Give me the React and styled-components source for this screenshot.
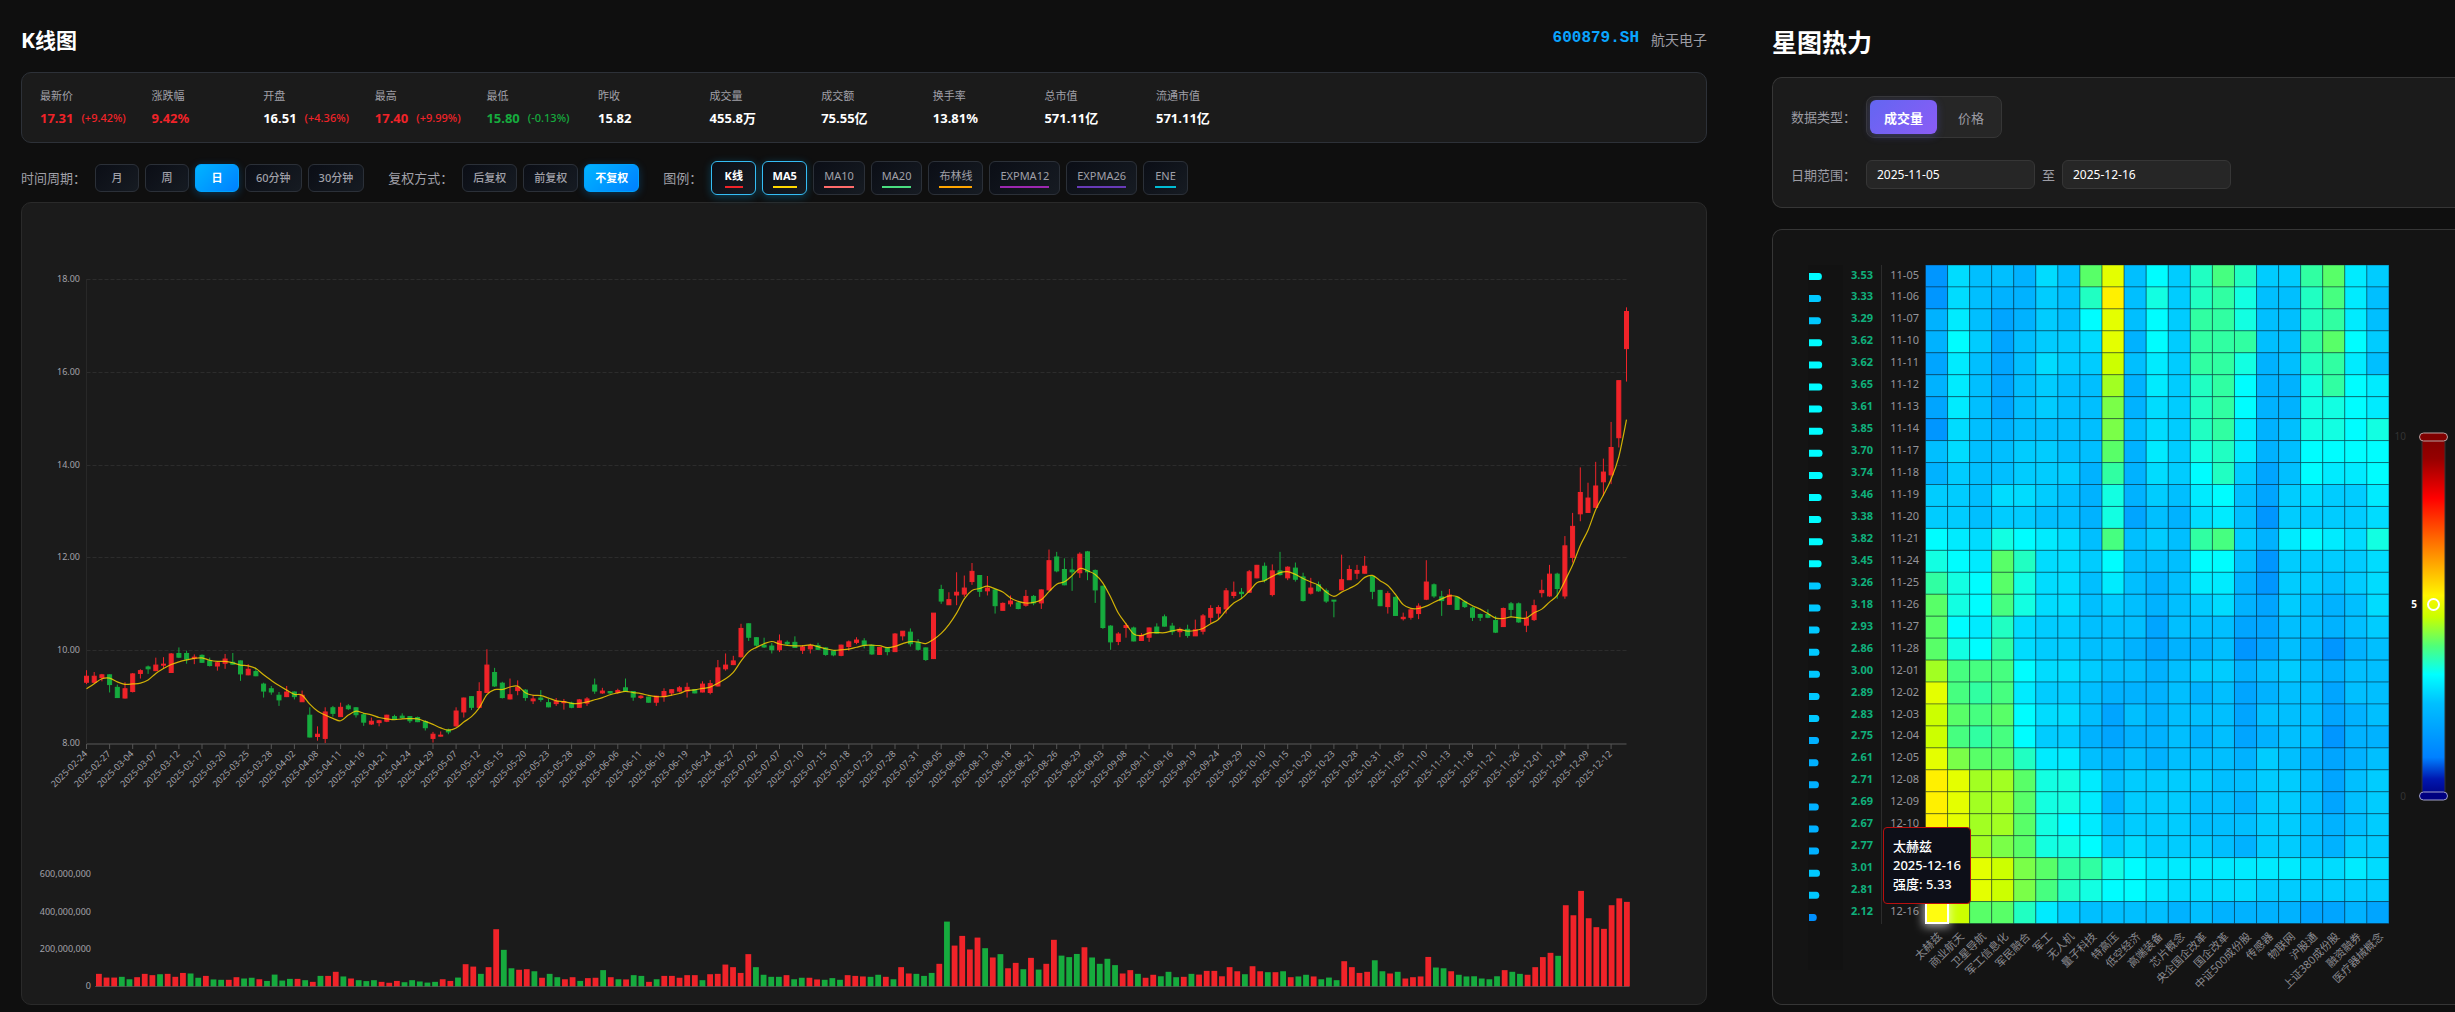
import React, { useState } from 'react';
import styled, { createGlobalStyle, css } from 'styled-components';

const UP = '#f02329';
const DOWN = '#16ab3e';

const GlobalStyle = createGlobalStyle`
  * {
    box-sizing: border-box;
  }
  body {
    margin: 0;
    background: #0f0f0f;
    color: #fff;
    font-family: 'Noto Sans', 'Noto Sans CJK SC', sans-serif;
    font-size: 13px;
    overflow-x: hidden;
  }
  button, input {
    font-family: inherit;
  }
`;

const Page = styled.div`
  display: grid;
  grid-template-columns: minmax(0, 1fr) 683px;
  gap: 65px;
  padding: 24px 0 7px 21px;
`;

const Column = styled.section`
  min-width: 0;
`;

const Header = styled.header`
  display: flex;
  align-items: center;
  justify-content: space-between;
  height: 32px;
  margin-bottom: 16px;
`;

const Title = styled.h1`
  margin: 0;
  font-size: 21px;
  line-height: 32px;
  font-weight: 700;
`;

const HeatTitle = styled.h2`
  margin: 0 0 17px;
  font-size: 25px;
  line-height: 36px;
  font-weight: 700;
`;

const Stock = styled.div`
  display: flex;
  align-items: center;
  gap: 12px;
  line-height: 20px;
`;

const StockCode = styled.span`
  font-family: 'Liberation Mono', monospace;
  font-size: 16px;
  line-height: 18px;
  padding-bottom: 4px;
  font-weight: 700;
  color: #0aa5ff;
`;

const StockName = styled.span`
  font-size: 14px;
  color: #9c9ca4;
`;

const StatsCard = styled.div`
  display: grid;
  grid-template-columns: repeat(auto-fill, minmax(84px, 1fr));
  gap: 26px;
  padding: 14px 18px;
  border: 1px solid #2d3138;
  border-radius: 10px;
  background: #1b1b1b;
`;

const StatLabel = styled.div`
  font-size: 11px;
  line-height: 18px;
  color: #a0a0a8;
`;

const StatLine = styled.div`
  display: flex;
  align-items: center;
  gap: 8px;
  margin-top: 3px;
  line-height: 20px;
  white-space: nowrap;
  color: ${({ $tone }) => $tone || '#fff'};
`;

const StatValue = styled.span`
  font-size: 13px;
  font-weight: 700;
  color: ${({ $plain }) => ($plain ? '#fff' : 'inherit')};
`;

const StatChange = styled.span`
  font-size: 11px;
  font-weight: 500;
`;

const Toolbar = styled.div`
  display: flex;
  flex-wrap: wrap;
  align-items: center;
  gap: 24px;
  margin: 18px 0 7px;
`;

const Group = styled.div`
  display: flex;
  align-items: center;
  gap: 6px;
  min-height: 34px;
`;

const GroupLabel = styled.span`
  margin-right: 3px;
  color: #a0a0a8;
  line-height: 20px;
`;

const chip = css`
  border: 1px solid #2b3038;
  border-radius: 6px;
  background: linear-gradient(135deg, #0b0e16, #161b22);
  color: #a0a0a8;
  font-size: 11px;
  line-height: 16px;
  cursor: pointer;
`;

const OptionButton = styled.button`
  ${chip}
  height: 28px;
  min-width: 44px;
  padding: 0 10px;
  font-weight: 500;
  ${({ $active }) => $active && css`
    border-color: #00a2ff;
    background: linear-gradient(135deg, #00b4ff, #0080ff);
    box-shadow: 0 2px 8px rgba(0, 150, 255, 0.3);
    color: #fff;
    font-weight: 700;
  `}
`;

const LegendButton = styled.button`
  ${chip}
  height: 34px;
  min-width: 45px;
  padding: 0 10px 1px;
  ${({ $active }) => $active && css`
    padding: 0 9px 1px;
    border-color: #35bdf5;
    box-shadow: 0 2px 8px rgba(0, 180, 255, 0.3);
    color: #fff;
    font-weight: 700;
  `}
`;

const LegendText = styled.span`
  display: inline-block;
  padding-bottom: 2px;
  border-bottom: 2px solid ${({ $color }) => $color};
`;

const ChartCard = styled.div`
  border: 1px solid #2a2a2a;
  border-radius: 10px;
  background: #1b1b1b;
`;

const Chart = styled.svg`
  display: block;
  width: 100%;
  height: auto;
`;

const AxisText = styled.text`
  font-size: ${({ $size }) => $size || 9}px;
  font-weight: ${({ $bold }) => ($bold ? 700 : 400)};
  fill: ${({ $fill }) => $fill || '#a2a2aa'};
  dominant-baseline: central;
`;

const FilterCard = styled.div`
  display: flex;
  flex-direction: column;
  gap: 22px;
  margin-bottom: 21px;
  padding: 18px;
  border: 1px solid #363636;
  border-right: 0;
  border-radius: 10px 0 0 10px;
  background: #1b1b1b;
`;

const FilterRow = styled.div`
  display: flex;
  align-items: center;
  gap: 10px;
`;

const FilterLabel = styled.label`
  width: 65px;
  color: #9c9ca4;
  line-height: 20px;
`;

const Segmented = styled.div`
  display: flex;
  gap: 7px;
  padding: 3px;
  border: 1px solid #363636;
  border-radius: 8px;
  background: #262626;
`;

const Segment = styled.button`
  height: 34px;
  padding: 0 14px;
  border: 0;
  border-radius: 6px;
  background: transparent;
  color: #9c9ca4;
  font-size: 13px;
  cursor: pointer;
  ${({ $active }) => $active && css`
    background: linear-gradient(135deg, #6366f1, #8b5cf6);
    box-shadow: 0 2px 8px rgba(99, 102, 241, 0.3);
    color: #fff;
    font-weight: 700;
  `}
`;

const DateInput = styled.input`
  width: 169px;
  height: 29px;
  padding: 0 10px;
  border: 1px solid #363636;
  border-radius: 6px;
  background: #262626;
  color: #fff;
  font-size: 12px;
`;

const DateJoin = styled.span`
  width: 13px;
  margin: 0 -3px;
  color: #9c9ca4;
  line-height: 20px;
`;

const HeatCard = styled.div`
  position: relative;
  border: 1px solid #363636;
  border-right: 0;
  border-radius: 10px 0 0 10px;
  background: #141414;
`;

const Tooltip = styled.div`
  position: absolute;
  left: 110px;
  bottom: 100px;
  padding: 9px;
  border: 1px solid #b80f0f;
  border-radius: 4px;
  background: #0d0f18;
  font-size: 13px;
  font-weight: 500;
  line-height: 19px;
  white-space: nowrap;
`;

const STATS = [
  { label: '最新价', value: '17.31', change: '(+9.42%)', tone: UP },
  { label: '涨跌幅', value: '9.42%', tone: UP },
  { label: '开盘', value: '16.51', change: '(+4.36%)', tone: UP, plain: true },
  { label: '最高', value: '17.40', change: '(+9.99%)', tone: UP },
  { label: '最低', value: '15.80', change: '(-0.13%)', tone: DOWN },
  { label: '昨收', value: '15.82' },
  { label: '成交量', value: '455.8万' },
  { label: '成交额', value: '75.55亿' },
  { label: '换手率', value: '13.81%' },
  { label: '总市值', value: '571.11亿' },
  { label: '流通市值', value: '571.11亿' },
];

const PERIODS = ['月', '周', '日', '60分钟', '30分钟'];
const ADJUSTS = ['后复权', '前复权', '不复权'];
const LEGENDS = [
  { name: 'K线', color: '#f02329' },
  { name: 'MA5', color: '#ffd700' },
  { name: 'MA10', color: '#ff6b6b' },
  { name: 'MA20', color: '#4ade80' },
  { name: '布林线', color: '#ffa500' },
  { name: 'EXPMA12', color: '#9c27b0' },
  { name: 'EXPMA26', color: '#673ab7' },
  { name: 'ENE', color: '#00bcd4' },
];

// one label for every third trading day
const DATES = `02-24 02-27 03-04 03-07 03-12 03-17 03-20 03-25 03-28 04-02 04-08 04-11 04-16 04-21
04-24 04-29 05-07 05-12 05-15 05-20 05-23 05-28 06-03 06-06 06-11 06-16 06-19 06-24 06-27 07-02
07-07 07-10 07-15 07-18 07-23 07-28 07-31 08-05 08-08 08-13 08-18 08-21 08-26 08-29 09-03 09-08
09-11 09-16 09-19 09-24 09-29 10-10 10-15 10-20 10-23 10-28 10-31 11-05 11-10 11-13 11-18 11-21
11-26 12-01 12-04 12-09 12-12`.split(/\s+/);

// open, close, low, high
const CANDLES = [
  [9.32, 9.45, 9.28, 9.58], [9.32, 9.45, 9.3, 9.54], [9.42, 9.48, 9.34, 9.5], [9.48, 9.27, 9.1, 9.49],
  [9.21, 8.99, 8.98, 9.27], [8.98, 9.18, 8.97, 9.32], [9.12, 9.5, 9.1, 9.52], [9.51, 9.57, 9.4, 9.6],
  [9.65, 9.61, 9.5, 9.68], [9.57, 9.69, 9.56, 9.85], [9.69, 9.71, 9.62, 9.86], [9.53, 9.93, 9.52, 9.95],
  [9.94, 9.86, 9.84, 10.07], [9.94, 9.82, 9.72, 10], [9.84, 9.86, 9.71, 9.92], [9.9, 9.75, 9.74, 9.92],
  [9.78, 9.68, 9.66, 9.85], [9.67, 9.74, 9.57, 9.76], [9.73, 9.82, 9.61, 9.93], [9.75, 9.71, 9.7, 9.95],
  [9.78, 9.5, 9.35, 9.79], [9.48, 9.6, 9.47, 9.71], [9.55, 9.46, 9.45, 9.62], [9.28, 9.13, 8.99, 9.31],
  [9.18, 9.11, 9.05, 9.24], [9.04, 8.94, 8.81, 9.11], [9.01, 9.11, 9, 9.24], [9.11, 9.01, 8.95, 9.12],
  [8.9, 9.04, 8.9, 9.14], [8.61, 8.14, 8.13, 8.78], [8.15, 8.2, 8.06, 8.37], [8.11, 8.68, 8.01, 8.78],
  [8.77, 8.65, 8.58, 8.81], [8.58, 8.78, 8.57, 8.88], [8.81, 8.75, 8.72, 8.85], [8.77, 8.62, 8.56, 8.78],
  [8.62, 8.46, 8.38, 8.66], [8.42, 8.48, 8.4, 8.56], [8.45, 8.49, 8.37, 8.51], [8.48, 8.61, 8.46, 8.62],
  [8.58, 8.52, 8.51, 8.62], [8.59, 8.56, 8.54, 8.65], [8.58, 8.49, 8.44, 8.58], [8.56, 8.47, 8.46, 8.58],
  [8.47, 8.34, 8.28, 8.5], [8.11, 8.2, 8.02, 8.25], [8.16, 8.18, 8.15, 8.26], [8.29, 8.25, 8.2, 8.32],
  [8.38, 8.7, 8.36, 8.78], [8.68, 8.98, 8.56, 8.99], [9.01, 8.78, 8.72, 9.02], [8.78, 9.12, 8.77, 9.32],
  [9.1, 9.69, 9.09, 10.03], [9.53, 9.24, 9.22, 9.63], [9.3, 8.99, 8.97, 9.33], [8.96, 9.05, 8.95, 9.4],
  [9.14, 9.21, 9.04, 9.36], [9.15, 8.99, 8.92, 9.17], [8.92, 8.96, 8.85, 9.05], [8.98, 8.95, 8.9, 9.15],
  [8.88, 8.79, 8.78, 8.97], [8.86, 8.91, 8.81, 8.98], [8.88, 8.9, 8.73, 8.96], [8.87, 8.78, 8.76, 8.9],
  [8.78, 8.94, 8.78, 8.96], [8.87, 8.96, 8.81, 9], [9.26, 9.13, 9.07, 9.4], [9.09, 9.13, 9.07, 9.2],
  [9.12, 9.09, 9.06, 9.13], [9.1, 9.14, 9.08, 9.18], [9.2, 9.13, 9.12, 9.4], [9.12, 9, 8.92, 9.13],
  [8.99, 9.02, 8.96, 9.04], [9, 8.89, 8.88, 9.01], [8.89, 9.02, 8.81, 9.03], [9.01, 9.12, 8.9, 9.19],
  [9.09, 9.16, 9.03, 9.17], [9.13, 9.2, 9.1, 9.24], [9.13, 9.21, 8.99, 9.31], [9.16, 9.09, 9.08, 9.17],
  [9.11, 9.28, 9.1, 9.34], [9.1, 9.29, 9.06, 9.37], [9.24, 9.63, 9.23, 9.8], [9.61, 9.69, 9.57, 9.94],
  [9.7, 9.78, 9.69, 9.89], [9.87, 10.48, 9.85, 10.58], [10.58, 10.29, 10.21, 10.59], [10.28, 10.12, 10.09, 10.29],
  [10.12, 10.08, 10.06, 10.28], [10.1, 10.02, 9.94, 10.17], [10.02, 10.21, 9.97, 10.35], [10.18, 10.15, 10.12, 10.22],
  [10.18, 10.07, 10.06, 10.31], [10.01, 10.08, 9.93, 10.12], [10.04, 10.11, 9.94, 10.15], [10.11, 10.03, 10.01, 10.17],
  [10.06, 9.92, 9.89, 10.08], [9.99, 9.91, 9.88, 10], [9.9, 10.12, 9.88, 10.13], [10.09, 10.19, 10, 10.22],
  [10.18, 10.23, 10.14, 10.29], [10.21, 10.12, 10.05, 10.27], [10.12, 9.93, 9.91, 10.13], [9.92, 10.07, 9.91, 10.08],
  [10.06, 9.98, 9.9, 10.07], [9.98, 10.36, 9.97, 10.38], [10.32, 10.42, 10.22, 10.42], [10.4, 10.15, 10.09, 10.48],
  [10.18, 10.03, 10, 10.25], [10.06, 9.81, 9.78, 10.07], [9.83, 10.81, 9.82, 10.81], [11.32, 11.07, 11.01, 11.42],
  [10.99, 11.1, 10.99, 11.26], [11.2, 11.26, 10.98, 11.69], [11.22, 11.35, 11.16, 11.62], [11.49, 11.71, 11.42, 11.89],
  [11.62, 11.28, 11.16, 11.63], [11.29, 11.35, 11.19, 11.61], [11.31, 10.97, 10.8, 11.34], [10.87, 11.02, 10.87, 11.04],
  [11.01, 11.07, 10.95, 11.19], [11.03, 10.91, 10.89, 11.05], [10.98, 11.17, 10.95, 11.31], [11.17, 11.03, 10.98, 11.2],
  [11.03, 11.31, 10.9, 11.32], [11.31, 11.94, 11.29, 12.18], [12.02, 11.72, 11.69, 12.13], [11.75, 11.42, 11.41, 11.99],
  [11.74, 11.7, 11.29, 11.99], [11.68, 12.08, 11.57, 12.12], [12.13, 11.7, 11.52, 12.15], [11.73, 11.31, 11.03, 11.75],
  [11.39, 10.5, 10.47, 11.4], [10.53, 10.19, 10.02, 10.55], [10.2, 10.36, 10.12, 10.4], [10.5, 10.54, 10.28, 10.6],
  [10.49, 10.21, 10.2, 10.52], [10.22, 10.33, 10.21, 10.38], [10.29, 10.49, 10.19, 10.5], [10.51, 10.38, 10.37, 10.59],
  [10.73, 10.53, 10.52, 10.78], [10.53, 10.41, 10.34, 10.6], [10.41, 10.46, 10.29, 10.5], [10.46, 10.33, 10.28, 10.56],
  [10.32, 10.45, 10.32, 10.67], [10.42, 10.75, 10.35, 10.79], [10.72, 10.91, 10.59, 10.98], [10.81, 10.93, 10.68, 10.98],
  [10.9, 11.29, 10.8, 11.35], [11.19, 11.26, 11.13, 11.49], [11.26, 11.23, 11.14, 11.35], [11.26, 11.7, 11.25, 11.74],
  [11.57, 11.84, 11.56, 11.85], [11.82, 11.52, 11.47, 11.9], [11.21, 11.72, 11.17, 11.86], [11.72, 11.64, 11.62, 12.13],
  [11.57, 11.8, 11.52, 11.82], [11.78, 11.54, 11.49, 11.9], [11.59, 11.08, 11.06, 11.68], [11.24, 11.35, 11.21, 11.57],
  [11.42, 11.29, 11.27, 11.49], [11.29, 11.07, 11.03, 11.34], [11.09, 11.07, 10.72, 11.09], [11.31, 11.53, 11.31, 12.07],
  [11.53, 11.75, 11.53, 11.84], [11.67, 11.73, 11.54, 11.85], [11.67, 11.82, 11.66, 12.04], [11.6, 11.28, 11.11, 11.61],
  [11.3, 10.97, 10.96, 11.31], [10.95, 11.23, 10.8, 11.28], [11.15, 10.76, 10.75, 11.17], [10.69, 10.72, 10.65, 10.82],
  [10.72, 10.88, 10.67, 10.9], [10.8, 10.96, 10.68, 11.02], [11.11, 11.48, 11.09, 11.95], [11.42, 11.18, 11.14, 11.45],
  [11.16, 11.08, 10.75, 11.29], [11, 11.2, 10.99, 11.33], [11.15, 10.89, 10.88, 11.16], [11.05, 10.95, 10.92, 11.08],
  [10.92, 10.72, 10.64, 10.95], [10.78, 10.72, 10.64, 10.8], [10.78, 10.72, 10.7, 10.89], [10.65, 10.4, 10.38, 10.75],
  [10.52, 10.91, 10.51, 10.93], [11.01, 10.89, 10.72, 11.05], [11.01, 10.62, 10.6, 11.04], [10.55, 10.7, 10.4, 10.85],
  [10.67, 10.97, 10.64, 11.1], [11.25, 11.3, 11.15, 11.53], [11.18, 11.65, 11.16, 11.85], [11.65, 11.34, 11.12, 11.68],
  [11.18, 12.26, 11.12, 12.47], [12.01, 12.68, 11.9, 12.97], [12.95, 13.41, 12.79, 13.95], [12.98, 13.29, 12.97, 13.62],
  [13.09, 13.55, 13.08, 14.07], [13.64, 13.85, 13.34, 14.14], [13.79, 14.38, 13.59, 14.93], [14.59, 15.82, 14.38, 15.82],
  [16.51, 17.31, 15.8, 17.4],
];

// closes of the four sessions before the first candle, needed for MA5
const EARLIER_CLOSES = [8.9, 8.95, 9.2, 9.4];

// millions of shares
const VOLUMES = [
  68, 48, 48, 52, 39, 50, 68, 61, 66, 68, 52, 73, 70, 47, 57, 38, 36, 36, 50, 43,
  47, 39, 30, 64, 32, 41, 41, 34, 25, 57, 57, 79, 54, 43, 34, 29, 34, 25, 20, 30,
  23, 34, 27, 21, 25, 39, 30, 48, 120, 107, 68, 104, 308, 197, 98, 90, 93, 82, 47, 68,
  50, 39, 50, 30, 45, 47, 88, 50, 39, 38, 61, 57, 25, 39, 57, 57, 47, 61, 61, 34,
  66, 68, 118, 104, 73, 174, 104, 63, 52, 52, 61, 39, 47, 47, 38, 36, 45, 36, 61, 57,
  54, 52, 63, 52, 39, 104, 70, 68, 57, 73, 122, 349, 220, 272, 199, 263, 206, 156, 174, 98,
  127, 93, 154, 91, 122, 251, 166, 158, 175, 211, 156, 122, 149, 115, 70, 88, 68, 47, 63, 55,
  79, 50, 52, 68, 64, 84, 84, 55, 104, 82, 66, 109, 82, 77, 77, 82, 50, 54, 63, 54,
  39, 48, 34, 136, 104, 73, 79, 141, 82, 70, 79, 43, 50, 54, 159, 102, 98, 82, 63, 54,
  55, 43, 39, 55, 88, 79, 68, 63, 104, 158, 181, 165, 437, 383, 514, 367, 319, 310, 437, 474,
  455,
];

const PLOT = { left: 64.5, right: 1604.5, bottom: 540.5, unit: 46.4 };
const VOL = { left: 77, step: 7.64, bottom: 783.5, unit: 0.186 };

const priceY = (price) => PLOT.bottom - (price - 8) * PLOT.unit;
const dayX = (i) => PLOT.left + i * 7.7;

const smoothPath = (points) => {
  let d = `M${points[0][0]},${points[0][1]}`;
  for (let i = 0; i < points.length - 1; i++) {
    const p0 = points[i - 1] || points[i];
    const p1 = points[i];
    const p2 = points[i + 1];
    const p3 = points[i + 2] || p2;
    d += `C${p1[0] + (p2[0] - p0[0]) / 6},${p1[1] + (p2[1] - p0[1]) / 6} ${p2[0] - (p3[0] - p1[0]) / 6},${p2[1] - (p3[1] - p1[1]) / 6} ${p2[0]},${p2[1]}`;
  }
  return d;
};

const closes = EARLIER_CLOSES.concat(CANDLES.map((c) => c[1]));
const ma5 = CANDLES.map((_, i) => {
  const sum = closes.slice(i, i + 5).reduce((a, b) => a + b, 0);
  return [dayX(i), priceY(sum / 5)];
});

const KLineChart = () => (
  <Chart viewBox="0 0 1684 801" role="img" aria-label="K线图">
    {[10, 12, 14, 16, 18].map((p) => (
      <line key={p} x1={PLOT.left} x2={PLOT.right} y1={Math.floor(priceY(p)) + 0.5} y2={Math.floor(priceY(p)) + 0.5} stroke="#2c2c2c" strokeDasharray="4 2" />
    ))}
    <line x1={PLOT.left} x2={PLOT.left} y1="76" y2="540" stroke="#282828" />
    {[8, 10, 12, 14, 16, 18].map((p) => (
      <AxisText key={p} x="58" y={priceY(p) - 1} textAnchor="end">{p.toFixed(2)}</AxisText>
    ))}
    {CANDLES.map(([open, close, low, high], i) => {
      const color = close > open ? UP : DOWN;
      const top = priceY(Math.max(open, close));
      const height = Math.max(Math.abs(close - open) * PLOT.unit, 1);
      return (
        <g key={i} fill={color} stroke={color}>
          <line x1={dayX(i)} x2={dayX(i)} y1={priceY(high)} y2={priceY(low)} strokeWidth="1" />
          <rect x={dayX(i) - 2} y={top} width="4" height={height} strokeWidth="1" />
        </g>
      );
    })}
    <line x1={PLOT.left} x2={PLOT.right} y1="541" y2="541" stroke="#3a3a3a" strokeWidth="2" />
    <path d={smoothPath(ma5)} fill="none" stroke="#ffd700" strokeOpacity="0.8" strokeWidth="1.2" />
    {DATES.map((date, i) => (
      <g key={date}>
        <line x1={dayX(i * 3)} x2={dayX(i * 3)} y1="541" y2="546" stroke="#555" />
        <AxisText textAnchor="end" transform={`translate(${dayX(i * 3) - 1} 549) rotate(-45)`}>{`2025-${date}`}</AxisText>
      </g>
    ))}
    {[0, 200, 400, 600].map((v) => (
      <AxisText key={v} x="69" y={VOL.bottom - v * VOL.unit - 1} textAnchor="end">
        {(v * 1000000).toLocaleString('en-US')}
      </AxisText>
    ))}
    {VOLUMES.map((v, i) => (
      <rect
        key={i}
        x={VOL.left + i * VOL.step - 3}
        y={VOL.bottom - v * VOL.unit}
        width="5.8"
        height={v * VOL.unit}
        fill={CANDLES[i][1] > CANDLES[i][0] ? UP : DOWN}
      />
    ))}
    <line x1="73" x2="1607" y1="783.5" y2="783.5" stroke="#666" strokeOpacity="0.6" />
  </Chart>
);

const HEAT_COLORS = {
  a: '#0096ff', b: '#00a5ff', c: '#00b2ff', d: '#00bfff', e: '#00ccff', f: '#00dcff',
  g: '#00ebff', h: '#00fdff', i: '#12ffe2', j: '#20ffc2', k: '#30ffa2', l: '#46ff80',
  m: '#58ff68', n: '#7aff48', o: '#a2ff22', p: '#ccff00', q: '#e4ff00', r: '#fff000',
};

// day, mean strength, one colour step per sector
const HEAT_ROWS = [
  ['11-05', 3.53, 'afddcfdmqdhejljeekmge'],
  ['11-06', 3.33, 'afdccedjrdiejkiddjlgd'],
  ['11-07', 3.29, 'cgdbcedhqdhekkiddjkgd'],
  ['11-10', 3.62, 'chebdeefqchekkkddkmhe'],
  ['11-11', 3.62, 'bgdbdfeepdgekkicdjkgd'],
  ['11-12', 3.65, 'cgdbdeddocgejkhccikhg'],
  ['11-13', 3.61, 'bgdbdeddncfejkhcciihg'],
  ['11-14', 3.85, 'afdcddddndfejkgcdiihi'],
  ['11-17', 3.7, 'dfddeeddmcgeijgcdhhhh'],
  ['11-18', 3.74, 'ceddeeeckcfehjebdhggh'],
  ['11-19', 3.46, 'eedffedcicedghdbefeeg'],
  ['11-20', 3.38, 'eedeeddcibdcfgdaeeeef'],
  ['11-21', 3.82, 'hgfihgfdldedklecghgfi'],
  ['11-24', 3.45, 'ihgmjffehdddhhdaeeeef'],
  ['11-25', 3.26, 'kihmiffdgdcdggcaeedef'],
  ['11-26', 3.18, 'mihliffdedcdefcbedcdf'],
  ['11-27', 2.93, 'mhgjfeedddbdddbbddcde'],
  ['11-28', 2.86, 'mihkfeeddcbccdabdcacd'],
  ['12-01', 3, 'olllhffeddcdeecdedcdd'],
  ['12-02', 2.89, 'qlklgeedcccdcdbcddbdd'],
  ['12-03', 2.83, 'pmlmhffdbdcdddbdddbcd'],
  ['12-04', 2.75, 'plklheecbccdcdbcddacc'],
  ['12-05', 2.61, 'qnmmjggdcdcdddcedcbcd'],
  ['12-08', 2.71, 'rqoomiigdeeeeddeedbde'],
  ['12-09', 2.69, 'rqoomiigceeeddceedbde'],
  ['12-10', 2.67, 'rqoomihgdeeedddeedcde'],
  ['12-11', 2.77, 'rqonmiihefeeedceedcee'],
  ['12-12', 3.01, 'rqqpnmkkihgggggggffgf'],
  ['12-15', 2.81, 'rqqpnljihhgffffeeeeee'],
  ['12-16', 2.12, 'rpmmjgeddddcdccccbbcb'],
];

const SECTORS = [
  '太赫兹', '商业航天', '卫星导航', '军工信息化', '军民融合', '军工', '无人机', '量子科技', '特高压',
  '低空经济', '高端装备', '芯片概念', '央企国企改革', '国企改革', '中证500成份股', '传感器', '物联网',
  '沪股通', '上证380成份股', '融资融券', '医疗器械概念',
];

const SCALE_STOPS = [
  [0, '#800000'], [0.06, '#960000'], [0.17, '#ff0000'], [0.3, '#ff7800'], [0.44, '#fff500'],
  [0.5, '#c8ff00'], [0.58, '#50ff78'], [0.66, '#00ffff'], [0.74, '#00c0ff'], [0.89, '#0080ff'],
  [0.95, '#0018b0'], [1, '#000080'],
];

const CELL_W = 22.07;
const CELL_H = 21.95;
const GRID_X = 152.5;
const GRID_Y = 35;

const barColor = (v) => {
  if (v > 3.35) return '#00fbff';
  if (v > 2.8) return '#00c8ff';
  return v > 2.5 ? '#00b0ff' : '#0090ff';
};

const HeatChart = () => (
  <Chart viewBox="0 0 682 774" role="img" aria-label="星图热力">
    <defs>
      <linearGradient id="scale" x1="0" y1="0" x2="0" y2="1">
        {SCALE_STOPS.map(([offset, color]) => <stop key={offset} offset={offset} stopColor={color} />)}
      </linearGradient>
      <filter id="glow" x="-80%" y="-80%" width="260%" height="260%">
        <feGaussianBlur stdDeviation="5" />
      </filter>
    </defs>
    <rect x="35" y="35" width="35" height="705" fill="#121212" />
    <line x1="108.5" x2="108.5" y1={GRID_Y} y2="694" stroke="#2c2c2c" />
    {HEAT_ROWS.map(([day, strength, cells], r) => {
      const y = GRID_Y + r * CELL_H;
      const w = strength * 3.65;
      const barY = 43 + r * 22.1;
      return (
        <g key={day}>
          <path
            d={`M36 ${barY}h${w - 3}q3 0 3 3.5q0 3.5 -3 3.5h${3 - w}z`}
            fill={barColor(strength)}
          />
          <AxisText x="100" y={y + 9} textAnchor="end" $size={11} $bold $fill="#10b07c">{strength.toFixed(2)}</AxisText>
          <AxisText x="146" y={y + 9} textAnchor="end" $size={11} $fill="#94949a">{day}</AxisText>
          {cells.split('').map((level, c) => (
            <rect
              key={c}
              x={GRID_X + c * CELL_W}
              y={y}
              width={CELL_W}
              height={CELL_H}
              fill={HEAT_COLORS[level]}
              stroke="#0a2030"
              strokeOpacity="0.4"
            />
          ))}
        </g>
      );
    })}
    {SECTORS.map((name, i) => (
      <AxisText
        key={name}
        textAnchor="end"
        $size={11}
        $fill="#8a8a90"
        transform={`translate(${GRID_X + (i + 0.5) * CELL_W + 3} 704) rotate(-45)`}
      >
        {name}
      </AxisText>
    ))}
    <rect x="150" y="670" width="27" height="27" fill="#fff" opacity="0.6" filter="url(#glow)" />
    <rect x="153" y="672" width="22" height="21" fill="#fffc10" stroke="#fff" strokeWidth="2" />
    <rect x="649" y="207" width="23" height="360" fill="url(#scale)" stroke="#333" />
    <rect x="646.5" y="203" width="28" height="8" rx="4" fill="#800000" stroke="#b8a0a0" />
    <rect x="646.5" y="562" width="28" height="8" rx="4" fill="#000080" stroke="#a0a0c8" />
    <circle cx="660.5" cy="374.5" r="5.5" fill="none" stroke="#fff" strokeWidth="2" />
    <AxisText x="633" y="206" textAnchor="end" $size={10} $fill="#333">10</AxisText>
    <AxisText x="633" y="566" textAnchor="end" $size={10} $fill="#333">0</AxisText>
    <AxisText x="644" y="374" textAnchor="end" $size={10} $bold $fill="#fff">5</AxisText>
  </Chart>
);

const App = () => {
  const [period, setPeriod] = useState('日');
  const [adjust, setAdjust] = useState('不复权');
  const [shown, setShown] = useState(['K线', 'MA5']);
  const [type, setType] = useState('成交量');

  const toggle = (name) =>
    setShown(shown.includes(name) ? shown.filter((n) => n !== name) : [...shown, name]);

  return (
    <>
      <GlobalStyle />
      <Page>
        <Column>
          <Header>
            <Title>K线图</Title>
            <Stock>
              <StockCode>600879.SH</StockCode>
              <StockName>航天电子</StockName>
            </Stock>
          </Header>
          <StatsCard>
            {STATS.map(({ label, value, change, tone, plain }) => (
              <div key={label}>
                <StatLabel>{label}</StatLabel>
                <StatLine $tone={tone}>
                  <StatValue $plain={plain}>{value}</StatValue>
                  {change && <StatChange>{change}</StatChange>}
                </StatLine>
              </div>
            ))}
          </StatsCard>
          <Toolbar>
            <Group>
              <GroupLabel>时间周期：</GroupLabel>
              {PERIODS.map((p) => (
                <OptionButton key={p} $active={p === period} onClick={() => setPeriod(p)}>{p}</OptionButton>
              ))}
            </Group>
            <Group>
              <GroupLabel>复权方式：</GroupLabel>
              {ADJUSTS.map((a) => (
                <OptionButton key={a} $active={a === adjust} onClick={() => setAdjust(a)}>{a}</OptionButton>
              ))}
            </Group>
            <Group>
              <GroupLabel>图例：</GroupLabel>
              {LEGENDS.map(({ name, color }) => (
                <LegendButton key={name} $active={shown.includes(name)} onClick={() => toggle(name)}>
                  <LegendText $color={color}>{name}</LegendText>
                </LegendButton>
              ))}
            </Group>
          </Toolbar>
          <ChartCard>
            <KLineChart />
          </ChartCard>
        </Column>
        <Column>
          <HeatTitle>星图热力</HeatTitle>
          <FilterCard>
            <FilterRow>
              <FilterLabel as="span">数据类型：</FilterLabel>
              <Segmented>
                {['成交量', '价格'].map((t) => (
                  <Segment key={t} $active={t === type} onClick={() => setType(t)}>{t}</Segment>
                ))}
              </Segmented>
            </FilterRow>
            <FilterRow>
              <FilterLabel htmlFor="from">日期范围：</FilterLabel>
              <DateInput id="from" defaultValue="2025-11-05" />
              <DateJoin>至</DateJoin>
              <DateInput id="to" aria-label="结束日期" defaultValue="2025-12-16" />
            </FilterRow>
          </FilterCard>
          <HeatCard>
            <HeatChart />
            <Tooltip>
              <div>太赫兹</div>
              <div>2025-12-16</div>
              <div>强度: 5.33</div>
            </Tooltip>
          </HeatCard>
        </Column>
      </Page>
    </>
  );
};

export default App;
